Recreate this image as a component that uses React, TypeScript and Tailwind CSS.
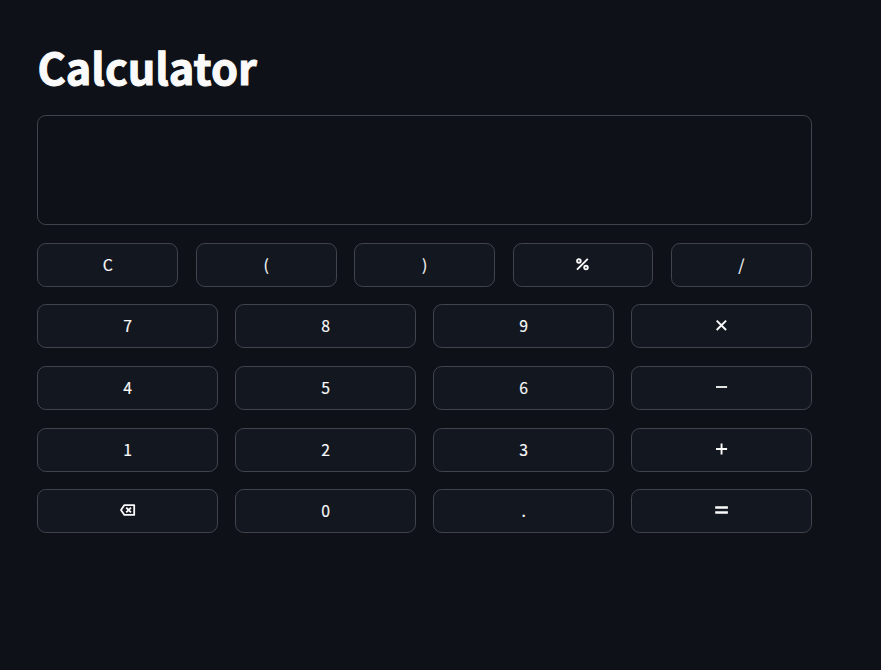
import type { ReactNode } from "react";

const iconClass = "block h-[18px] w-[18px] -translate-x-px -translate-y-px";

function Percent() {
  return (
    <svg className={iconClass} viewBox="0 0 18 18" fill="none" stroke="#fafafa" strokeWidth="1.9">
      <circle cx="5.9" cy="5.9" r="1.8" />
      <circle cx="13" cy="12.6" r="1.8" />
      <path d="M4 14.6 14.8 3.9" />
    </svg>
  );
}

function Times() {
  return (
    <svg className={iconClass} viewBox="0 0 18 18" fill="none" stroke="#fafafa" strokeWidth="1.95">
      <path d="M4.7 4.6 14.1 14M14.1 4.6 4.7 14" />
    </svg>
  );
}

function Minus() {
  return (
    <svg className={iconClass} viewBox="0 0 18 18" fill="#fafafa">
      <path d="M4 8.1h11.1v1.8H4z" />
    </svg>
  );
}

function Plus() {
  return (
    <svg className={iconClass} viewBox="0 0 18 18" fill="#fafafa">
      <path d="M4 8.1h11.1v1.9H4zM8.6 3.6h1.9v11H8.6z" />
    </svg>
  );
}

function Equal() {
  return (
    <svg className={iconClass} viewBox="0 0 18 18" fill="#fafafa">
      <path d="M3.2 5.2h12.7v2.6H3.2zM3.2 10.2h12.7v2.6H3.2z" />
    </svg>
  );
}

function Backspace() {
  return (
    <svg className={iconClass} viewBox="0 0 18 18" fill="none" stroke="#fafafa" strokeWidth="1.8">
      <path d="M6.4 4.1h9.8v9.8H6.4L3 9z" strokeLinejoin="round" />
      <path d="m8.2 6.6 4.8 4.8M13 6.6 8.2 11.4" />
    </svg>
  );
}

function Key({ label, children }: { label: string; children?: ReactNode }) {
  return (
    <button
      aria-label={label}
      className="flex h-[44px] min-w-0 items-center justify-center rounded-[8.8px] border border-[#41444c] bg-[#131720] text-[15.76px] leading-[28px] text-[#fafafa] [-webkit-text-stroke:0.15px_#fafafa]"
    >
      {children ?? label}
    </button>
  );
}

export default function App() {
  return (
    <main className="h-screen w-full overflow-hidden bg-[#0e1117] pl-[37.4px] pt-[37px] font-['Noto_Sans_CJK_JP','Noto_Sans',sans-serif]">
      <div className="w-[774.4px]">
        <h1 className="h-[78.2px] text-[43.3px] font-bold leading-[58px] tracking-[-0.001em] text-[#fafafa] [-webkit-text-stroke:1px_#fafafa]">Calculator</h1>
        <div className="flex flex-col gap-[17.6px]">
          <div className="h-[110px] rounded-[8.8px] border border-[#41444c]" />
          <div className="grid grid-cols-5 gap-[17.6px]">
            <Key label="C" />
            <Key label="(" />
            <Key label=")" />
            <Key label="percent"><Percent /></Key>
            <Key label="/" />
          </div>
          <div className="grid grid-cols-4 gap-[17.6px]">
            <Key label="7" />
            <Key label="8" />
            <Key label="9" />
            <Key label="multiply"><Times /></Key>
            <Key label="4" />
            <Key label="5" />
            <Key label="6" />
            <Key label="minus"><Minus /></Key>
            <Key label="1" />
            <Key label="2" />
            <Key label="3" />
            <Key label="plus"><Plus /></Key>
            <Key label="backspace"><Backspace /></Key>
            <Key label="0" />
            <Key label="." />
            <Key label="equals"><Equal /></Key>
          </div>
        </div>
      </div>
    </main>
  );
}
